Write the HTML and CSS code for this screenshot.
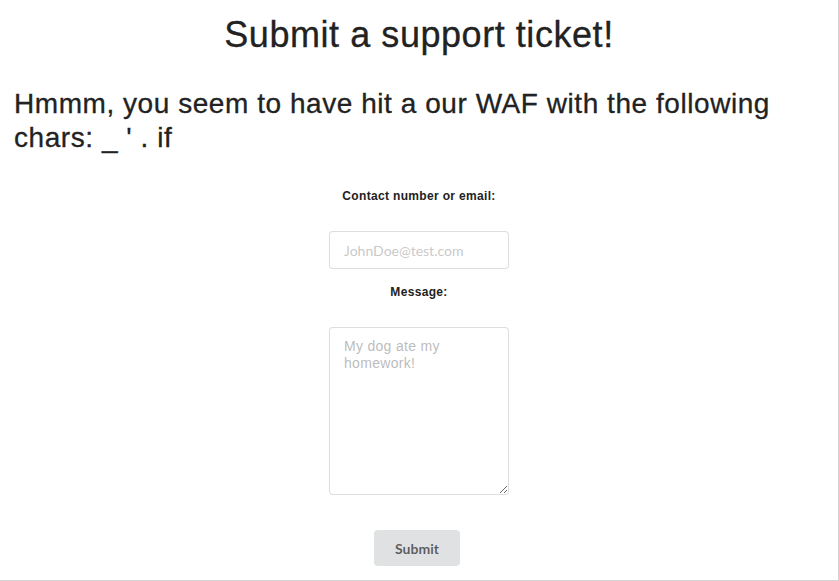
FILE: index.html
```html
<!DOCTYPE html>
<html>
<head>
<meta charset="utf-8">
<link rel="stylesheet" href="styles.css">
</head>
<body>
<div class="page">
  <h1 class="title">Submit a support ticket!</h1>
  <h2 class="waf">Hmmm, you seem to have hit a our WAF with the following chars: _ ' . if</h2>
  <form class="ticket">
    <label class="lbl lbl-contact">Contact number or email:</label>
    <input class="field" type="text" placeholder="JohnDoe@test.com">
    <label class="lbl lbl-msg">Message:</label>
    <textarea class="area" placeholder="My dog ate my homework!"></textarea>
    <button class="btn" type="button">Submit</button>
  </form>
</div>
</body>
</html>
```
FILE: styles.css
```css
html, body {
  margin: 0;
  padding: 0;
  background: #fff;
}
.page {
  box-sizing: border-box;
  width: 839px;
  height: 581px;
  border-right: 1px solid #d4d4d5;
  border-bottom: 1px solid #d4d4d5;
  font-family: "Liberation Sans", Arial, sans-serif;
  color: #222;
  overflow: hidden;
}
.title {
  margin: 13px 0 0;
  font-size: 36px;
  line-height: 43px;
  font-weight: normal;
  letter-spacing: 0.55px;
  -webkit-text-stroke: 0.3px #222;
  text-align: center;
}
.waf {
  margin: 31px 0 0;
  padding: 0 14px;
  font-size: 28px;
  line-height: 34px;
  font-weight: normal;
  letter-spacing: 0.55px;
  -webkit-text-stroke: 0.3px #222;
}
.ticket {
  display: flex;
  flex-direction: column;
  align-items: center;
  margin-top: 34px;
}
.lbl {
  font-size: 12px;
  line-height: 15px;
  font-weight: bold;
  letter-spacing: 0.33px;
  color: #222;
}
.field {
  box-sizing: border-box;
  margin-top: 27px;
  width: 180px;
  height: 38px;
  padding: 9.5px 14px;
  border: 1px solid rgba(34, 36, 38, 0.15);
  border-radius: 4px;
  font-family: Lato, sans-serif;
  font-size: 14px;
  line-height: 17px;
  outline: none;
}
.field::placeholder {
  color: rgba(191, 191, 191, 0.87);
}
.lbl-msg {
  margin-top: 16px;
}
.area {
  box-sizing: border-box;
  margin-top: 27px;
  width: 180px;
  height: 168px;
  padding: 10px 14px;
  border: 1px solid rgba(34, 36, 38, 0.15);
  border-radius: 4px;
  font-family: "Liberation Sans", Arial, sans-serif;
  font-size: 14px;
  line-height: 17px;
  letter-spacing: 0.3px;
  outline: none;
}
.area::placeholder {
  color: rgba(180, 180, 180, 0.9);
}
.btn {
  margin-top: 35px;
  margin-right: 4px;
  width: 86px;
  height: 36px;
  border: none;
  border-radius: 4px;
  background: #e0e1e2;
  color: rgba(0, 0, 0, 0.6);
  font-family: Lato, sans-serif;
  font-weight: bold;
  font-size: 14px;
  padding: 0;
}
```
